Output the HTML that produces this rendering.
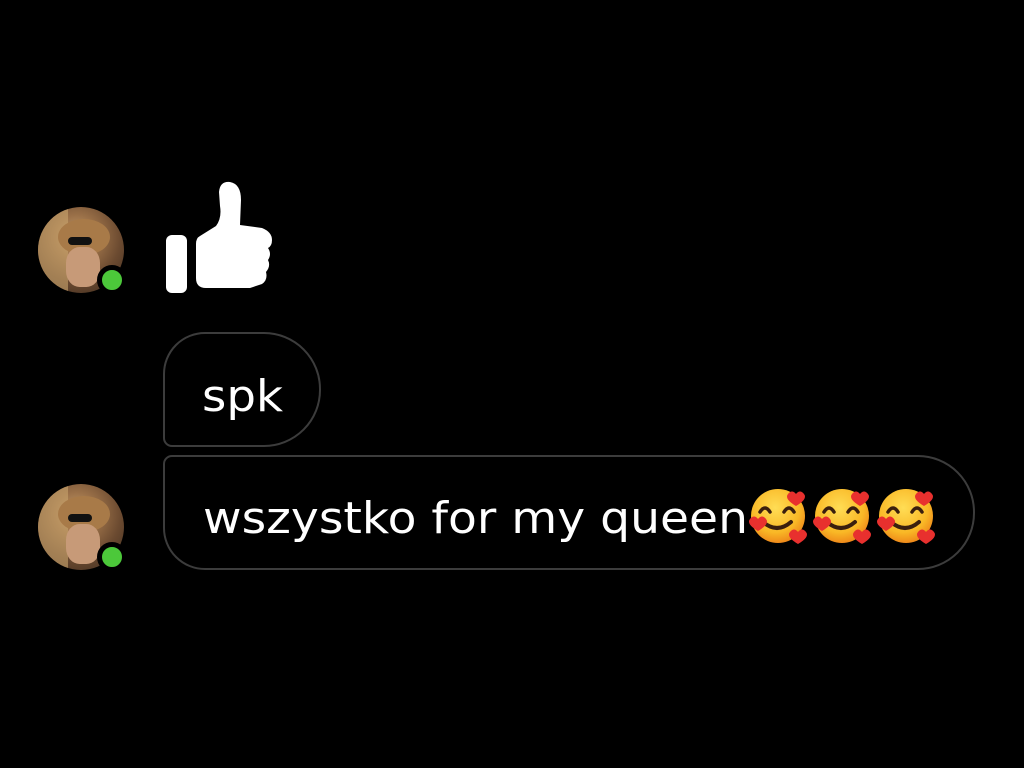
<!DOCTYPE html>
<html><head><meta charset="utf-8"><style>
html,body{margin:0;padding:0;background:#000;width:1024px;height:768px;overflow:hidden}
.abs{position:absolute}
.av{width:86px;height:86px;border-radius:50%;background:radial-gradient(circle at 45% 35%,#c9a06a 0,#9a7048 30%,#6b4a30 60%,#3a2a1e 100%);overflow:hidden}
.dot{width:20px;height:20px;border-radius:50%;background:#4cc83a;border:5px solid #000}
.b{border:2.5px solid #3c3c3c;box-sizing:border-box}
</style></head><body>
<div class="abs av" style="left:38px;top:207px">
 <div class="abs" style="left:0;top:0;width:30px;height:86px;background:#c9a56e;opacity:.6"></div>
 <div class="abs" style="left:20px;top:12px;width:52px;height:36px;border-radius:50%;background:#a87a48"></div>
 <div class="abs" style="left:30px;top:30px;width:24px;height:8px;background:#111;border-radius:4px"></div>
 <div class="abs" style="left:28px;top:40px;width:34px;height:40px;border-radius:40%;background:#c79a78"></div>
</div>
<div class="abs dot" style="left:97px;top:265px"></div>
<div class="abs av" style="left:38px;top:484px">
 <div class="abs" style="left:0;top:0;width:30px;height:86px;background:#c9a56e;opacity:.6"></div>
 <div class="abs" style="left:20px;top:12px;width:52px;height:36px;border-radius:50%;background:#a87a48"></div>
 <div class="abs" style="left:30px;top:30px;width:24px;height:8px;background:#111;border-radius:4px"></div>
 <div class="abs" style="left:28px;top:40px;width:34px;height:40px;border-radius:40%;background:#c79a78"></div>
</div>
<div class="abs dot" style="left:97px;top:542px"></div>

<svg class="abs" style="left:0;top:0" width="1024" height="768">
 <rect x="166" y="235" width="21" height="58" rx="6" fill="#fff"/>
 <path d="M200 236 L216 226 Q222 218 220 206 L219 192 Q220 181 230 182 Q241 184 241 200 L240 225 L262 228 Q272 232 272 240 Q272 246 268 248 Q272 254 268 260 Q271 266 266 272 Q268 280 262 284 L250 288 L206 288 Q196 288 196 278 L196 244 Q196 238 200 236 Z" fill="#fff"/>
 <g font-family="DejaVu Sans, Liberation Sans, sans-serif" fill="#fff">
  <text x="202" y="411" font-size="44" textLength="81" lengthAdjust="spacingAndGlyphs">spk</text>
  <text x="203" y="533" font-size="44" textLength="545" lengthAdjust="spacingAndGlyphs">wszystko for my queen</text>
 </g>
 <defs>
  <radialGradient id="f" cx="45%" cy="35%" r="65%"><stop offset="0" stop-color="#ffdd55"/><stop offset=".7" stop-color="#f9b826"/><stop offset="1" stop-color="#ef8a1a"/></radialGradient>
  <g id="e">
   <circle cx="30" cy="30" r="27" fill="url(#f)"/>
   <path d="M12 26 Q17 18 22 26 M36 26 Q41 18 46 26" stroke="#3a1f0e" stroke-width="3.5" fill="none" stroke-linecap="round"/>
   <path d="M15 36 Q29 48 43 36" stroke="#3a1f0e" stroke-width="4" fill="none" stroke-linecap="round"/>
   <path d="M48 8 q4-5 8 0 q4 5-8 12 q-12-7-8-12 q4-5 8 0z" fill="#e8302e"/>
   <path d="M10 33 q4-5 8 0 q4 5-8 12 q-12-7-8-12 q4-5 8 0z" fill="#e8302e"/>
   <path d="M50 46 q4-5 8 0 q4 5-8 12 q-12-7-8-12 q4-5 8 0z" fill="#e8302e"/>
  </g>
 </defs>
 <use href="#e" x="748" y="486"/>
 <use href="#e" x="812" y="486"/>
 <use href="#e" x="876" y="486"/>
</svg>

<div class="abs b" style="left:163px;top:332px;width:158px;height:115px;border-radius:42px 57px 57px 9px"></div>
<div class="abs b" style="left:163px;top:455px;width:812px;height:115px;border-radius:9px 57px 57px 42px"></div>
</body></html>
